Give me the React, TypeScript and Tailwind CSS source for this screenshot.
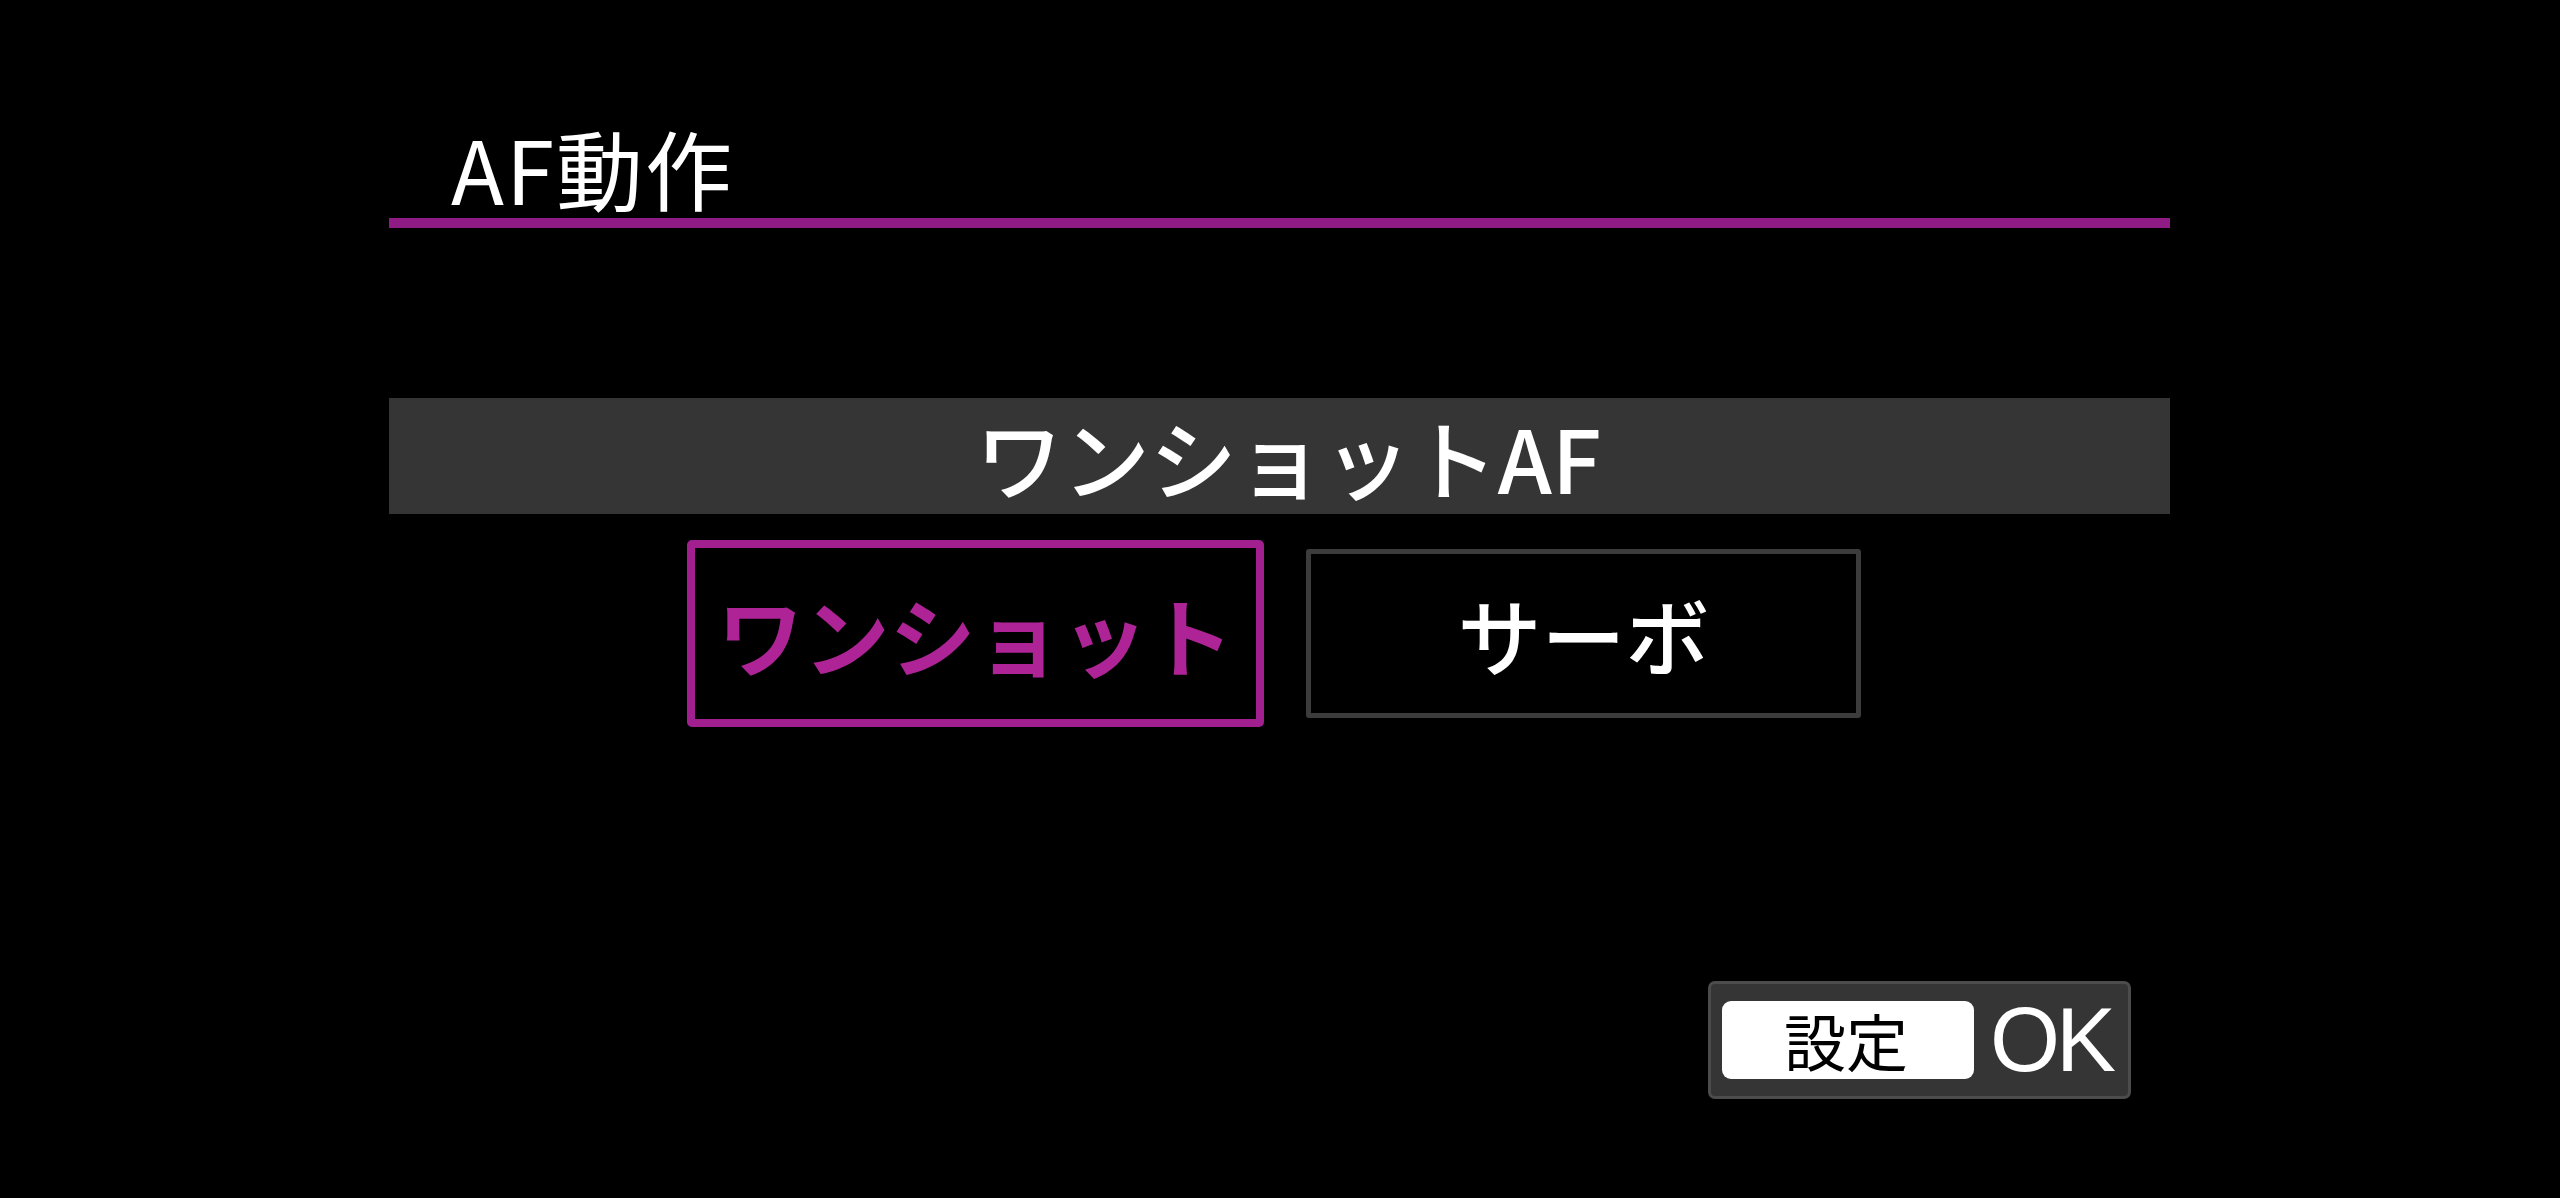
import React from "react";

const jp = { fontFamily: '"Noto Sans CJK JP", "Noto Sans", sans-serif' };

export default function App() {
  return (
    <div className="w-[2560px] h-[1198px] bg-black overflow-hidden" style={jp}>
      <div className="ml-[389px] w-[1781px] pt-[124px] flex flex-col">
        <div className="pl-[62px] h-[86px] text-[87px] leading-none text-white font-normal tracking-[2px]">
          AF動作
        </div>
        <div className="mt-[8px] h-[10px] bg-[#8e1c84]" />
        <div className="mt-[170px] h-[116px] bg-[#353535] flex items-center justify-center text-white text-[87px] leading-none font-medium pl-[18px]">
          ワンショットAF
        </div>
        <div className="mt-[26px] flex items-center pl-[298px] gap-[42px]">
          <div className="w-[577px] h-[187px] border-[8px] border-[#a21f90] rounded-[5px] flex items-center justify-center text-[#ae2496] text-[86px] leading-none font-bold">
            ワンショット
          </div>
          <div className="w-[555px] h-[169px] border-[5px] border-[#3c3c3c] rounded-[3px] flex items-center justify-center text-white text-[84px] leading-none font-medium">
            サーボ
          </div>
        </div>
        <div className="mt-[254px] flex justify-end pr-[39px]">
          <div className="w-[423px] h-[118px] bg-[#353535] border-[3px] border-[#4c4c4c] rounded-[7px] flex items-center pl-[11px]">
            <div className="w-[252px] h-[78px] bg-white rounded-[9px] flex items-center justify-center text-black text-[62px] leading-none pr-[4px]">
              設定
            </div>
            <div
              className="ml-[16px] text-white text-[90px] leading-none tracking-[-4px]"
              style={{ fontFamily: '"Liberation Sans", sans-serif' }}
            >
              OK
            </div>
          </div>
        </div>
      </div>
    </div>
  );
}
